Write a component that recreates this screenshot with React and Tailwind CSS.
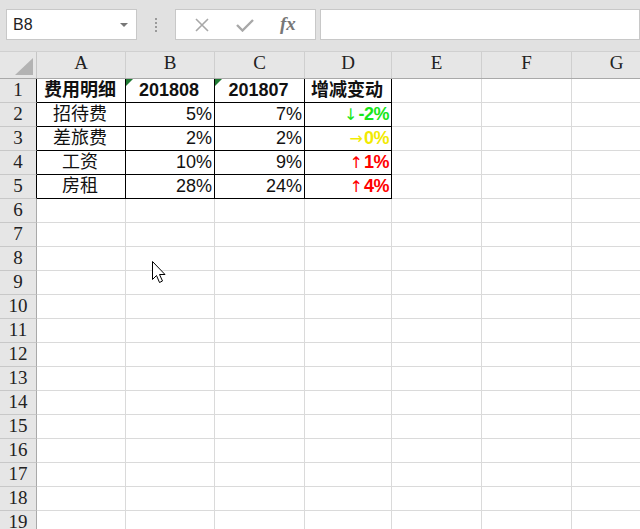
import React from "react";

const COLS = ["A", "B", "C", "D", "E", "F", "G"];
const COL_W = ["w-[89px]", "w-[89px]", "w-[90px]", "w-[87px]", "w-[90px]", "w-[90px]", "w-[90px]"];

const DATA = [
  [
    { t: "费用明细", bold: true, align: "center" },
    { t: "201808", bold: true, align: "center", flag: true },
    { t: "201807", bold: true, align: "center", flag: true },
    { t: "增减变动", bold: true, align: "center" },
  ],
  [
    { t: "招待费", align: "center" },
    { t: "5%", align: "right" },
    { t: "7%", align: "right" },
    { arrow: "↓", t: "-2%", color: "text-[#19e619]" },
  ],
  [
    { t: "差旅费", align: "center" },
    { t: "2%", align: "right" },
    { t: "2%", align: "right" },
    { arrow: "→", t: "0%", color: "text-[#f2ea00]" },
  ],
  [
    { t: "工资", align: "center" },
    { t: "10%", align: "right" },
    { t: "9%", align: "right" },
    { arrow: "↑", t: "1%", color: "text-[#ff0000]" },
  ],
  [
    { t: "房租", align: "center" },
    { t: "28%", align: "right" },
    { t: "24%", align: "right" },
    { arrow: "↑", t: "4%", color: "text-[#ff0000]" },
  ],
];

const cellFont = { fontFamily: '"Liberation Sans", "Noto Sans CJK SC", sans-serif' };
const serif = { fontFamily: '"Liberation Serif", "DejaVu Serif", serif' };
const arrowFont = { fontFamily: '"DejaVu Sans", sans-serif' };

function Cell({ cell, inTable }) {
  const borders = inTable ? "border-r border-b border-black" : "border-r border-b border-[#dadada]";
  if (!cell) return <div className={`h-full shrink-0 ${borders}`} />;
  if (cell.arrow) {
    return (
      <div className={`relative h-full flex items-center justify-end gap-[1px] pr-[2px] text-[18px] ${cell.color} ${borders}`}>
        <span className="text-[16px] leading-none" style={arrowFont}>
          {cell.arrow}
        </span>
        <span className="font-bold tracking-[-0.5px]">{cell.t}</span>
      </div>
    );
  }
  return (
    <div
      className={`relative h-full flex items-center pr-[2px] text-[18px] text-[#111] ${
        cell.align === "center" ? "justify-center" : "justify-end"
      } ${cell.bold ? "font-bold" : ""} ${borders}`}
    >
      {cell.flag && (
        <div className="absolute left-0 top-0 w-0 h-0 border-t-[7px] border-r-[7px] border-t-[#1f7a32] border-r-transparent" />
      )}
      {cell.t}
    </div>
  );
}

function Cursor() {
  return (
    <svg className="absolute left-[152px] top-[261px]" width="16" height="26" viewBox="0 0 16 26">
      <path
        d="M0.5 0.5 L0.5 18.5 L4.5 14.5 L7.5 21.5 L10.5 20 L7.5 13.5 L13 13.5 Z"
        fill="#fff"
        stroke="#000"
        strokeWidth="1"
      />
    </svg>
  );
}

export default function App() {
  const rows = Array.from({ length: 19 }, (_, i) => i + 1);
  return (
    <div className="relative w-[640px] h-[529px] overflow-hidden bg-white" style={cellFont}>
      {/* formula bar */}
      <div className="h-[52px] bg-[#e1e1e1] flex items-start pt-[9px] border-b border-[#d0d0d0]">
        <div className="ml-[6px] w-[131px] h-[31px] bg-white border border-[#c8c8c8] flex items-center justify-between pl-[6px] pr-[8px]">
          <span className="text-[16px] text-[#222]">B8</span>
          <div className="w-0 h-0 border-l-[4px] border-r-[4px] border-t-[4px] border-l-transparent border-r-transparent border-t-[#777]" />
        </div>
        <div className="w-[38px] h-[31px] flex flex-col items-center justify-center gap-[2px]">
          <div className="w-[2px] h-[2px] bg-[#9a9a9a]" />
          <div className="w-[2px] h-[2px] bg-[#9a9a9a]" />
          <div className="w-[2px] h-[2px] bg-[#9a9a9a]" />
          <div className="w-[2px] h-[2px] bg-[#9a9a9a]" />
        </div>
        <div className="w-[141px] h-[31px] bg-white border border-[#c8c8c8] flex items-center justify-around px-[6px]">
          <svg width="14" height="14" viewBox="0 0 14 14">
            <path d="M1 1 L13 13 M13 1 L1 13" stroke="#a8a8a8" strokeWidth="1.6" />
          </svg>
          <svg width="18" height="14" viewBox="0 0 18 14">
            <path d="M1 7 L6.5 12.5 L17 2" stroke="#a8a8a8" strokeWidth="2.4" fill="none" />
          </svg>
          <span className="text-[19px] italic font-semibold text-[#777]" style={serif}>
            fx
          </span>
        </div>
        <div className="ml-[4px] flex-1 h-[31px] bg-white border border-[#c8c8c8]" />
      </div>

      {/* column headers */}
      <div className="h-[27px] flex bg-[#e6e6e6] border-b border-[#a9a9a9]">
        <div className="relative w-[37px] shrink-0 border-r border-[#c6c6c6]">
          <svg className="absolute right-[3px] bottom-[3px]" width="18" height="17" viewBox="0 0 18 17">
            <path d="M18 0 L18 17 L0 17 Z" fill="#b3b3b3" />
          </svg>
        </div>
        {COLS.map((c, i) => (
          <div
            key={c}
            className={`${COL_W[i]} shrink-0 flex items-end justify-center pb-[1px] text-[19px] text-[#222] border-r border-[#cfcfcf]`}
            style={serif}
          >
            {c}
          </div>
        ))}
      </div>

      {/* grid rows */}
      {rows.map((r) => {
        const data = DATA[r - 1];
        return (
          <div key={r} className="h-[24px] flex">
            <div
              className={`w-[37px] shrink-0 flex items-center justify-center bg-[#e6e6e6] text-[19px] text-[#222] border-b border-[#c8c8c8] border-r ${
                data ? "border-r-black" : "border-r-[#a9a9a9]"
              }`}
              style={serif}
            >
              {r}
            </div>
            {COLS.map((c, i) => (
              <div key={c} className={`${COL_W[i]} shrink-0 h-full`}>
                <Cell cell={data ? data[i] : null} inTable={!!data && i < 4} />
              </div>
            ))}
          </div>
        );
      })}

      <Cursor />
    </div>
  );
}
